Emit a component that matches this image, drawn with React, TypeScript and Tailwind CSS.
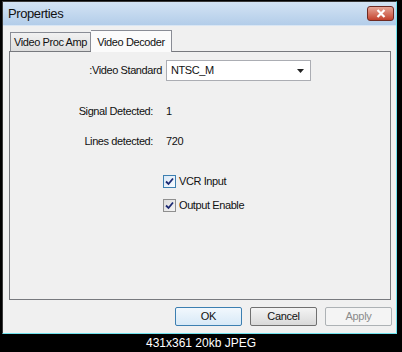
import React from "react";

const font = { fontFamily: '"Liberation Sans", Arial, sans-serif' };

function Check({ label, active }: { label: string; active?: boolean }) {
  return (
    <div className="flex items-center h-[14px]">
      <div
        className={`w-[13px] h-[13px] border flex items-center justify-center ${
          active ? "border-[#3c7fb1] bg-gradient-to-br from-[#dbe9f6] to-[#f7fbff]" : "border-[#8f8f8f] bg-gradient-to-br from-[#dcdcdc] to-[#f5f5f5]"
        }`}
      >
        <svg width="9" height="9" viewBox="0 0 9 9">
          <path d="M1 4.5 L3.5 7 L8 1.5" fill="none" stroke="#1c2a73" strokeWidth="1.8" />
        </svg>
      </div>
      <span className="ml-[3px] text-[11px] tracking-[-0.4px] text-[#111]">{label}</span>
    </div>
  );
}

function Btn({ label, kind }: { label: string; kind: "def" | "norm" | "dis" }) {
  const cls =
    kind === "def"
      ? "border-[#3c7fb1] bg-gradient-to-b from-[#f2f8fd] to-[#d7e9f7] text-[#111]"
      : kind === "norm"
      ? "border-[#707070] bg-gradient-to-b from-[#f4f4f4] to-[#d9d9d9] text-[#111]"
      : "border-[#adb2b5] bg-[#f4f4f4] text-[#8b8b8b]";
  return (
    <div
      className={`w-[67px] h-[19px] border rounded-[2px] flex items-center justify-center text-[11px] tracking-[-0.3px] ${cls}`}
    >
      {label}
    </div>
  );
}

export default function App() {
  return (
    <div className="w-[402px] h-[352px] bg-black flex flex-col" style={font}>
      <div className="ml-[2px] mt-[1px] w-[395px] h-[333px] flex flex-col border border-[#3a3a3a] border-r-[#6fe3ee] border-b-[#6fe3ee] bg-[#f0f0f0]">
        {/* title bar */}
        <div className="h-[24px] flex items-center justify-between bg-gradient-to-b from-[#d3e3f4] to-[#b3cde9] border-b border-[#d9e6f4]">
          <span className="ml-[5px] text-[13px] tracking-[-0.4px] text-[#111]">Properties</span>
          <div className="mr-[2px] w-[27px] h-[15px] rounded-[3px] border border-[#6e2a22] bg-gradient-to-b from-[#e6a597] to-[#c2402c] flex items-center justify-center">
            <svg width="10" height="9" viewBox="0 0 10 9">
              <path d="M1.5 1 L8.5 8 M8.5 1 L1.5 8" stroke="white" strokeWidth="2.2" />
            </svg>
          </div>
        </div>
        {/* tabs */}
        <div className="flex items-end ml-[7px] mt-[3px] h-[22px] relative z-10">
          <div className="w-[81px] h-[19px] border border-[#898c95] border-b-0 bg-gradient-to-b from-[#f1f1f1] to-[#dedede] flex items-center justify-center text-[11px] tracking-[-0.4px] text-[#111]">
            Video Proc Amp
          </div>
          <div className="w-[81px] h-[22px] border border-[#898c95] border-b-0 border-l-0 bg-[#fbfbfb] flex items-start pt-[3px] justify-center text-[11px] tracking-[-0.4px] text-[#111] mb-[-1px]">
            Video Decoder
          </div>
        </div>
        {/* panel */}
        <div className="ml-[6px] w-[382px] h-[249px] border border-[#77797e] bg-[#f0f0f0] flex flex-col text-[11px] tracking-[-0.4px] text-[#111]">
          <div className="flex items-center mt-[8px] h-[21px]">
            <div className="w-[152px] text-right">:Video Standard</div>
            <div className="ml-[4px] w-[145px] h-[21px] border border-[#abadb3] bg-white flex items-center justify-between">
              <span className="ml-[4px]">NTSC_M</span>
              <svg width="7" height="4" viewBox="0 0 7 4" className="mr-[6px]">
                <path d="M0 0 L7 0 L3.5 4 Z" fill="#222" />
              </svg>
            </div>
          </div>
          <div className="flex items-center mt-[23px] h-[14px]">
            <div className="w-[143px] text-right">Signal Detected:</div>
            <div className="ml-[13px]">1</div>
          </div>
          <div className="flex items-center mt-[16px] h-[14px]">
            <div className="w-[143px] text-right">Lines detected:</div>
            <div className="ml-[13px]">720</div>
          </div>
          <div className="ml-[153px] mt-[26px] flex flex-col gap-[10px]">
            <Check label="VCR Input" active />
            <Check label="Output Enable" />
          </div>
        </div>
        {/* buttons */}
        <div className="flex justify-end gap-[8px] mt-[7px] mr-[4px]">
          <Btn label="OK" kind="def" />
          <Btn label="Cancel" kind="norm" />
          <Btn label="Apply" kind="dis" />
        </div>
      </div>
      <div className="flex-1 flex items-center justify-center text-white text-[12px]">
        431x361 20kb JPEG
      </div>
    </div>
  );
}
